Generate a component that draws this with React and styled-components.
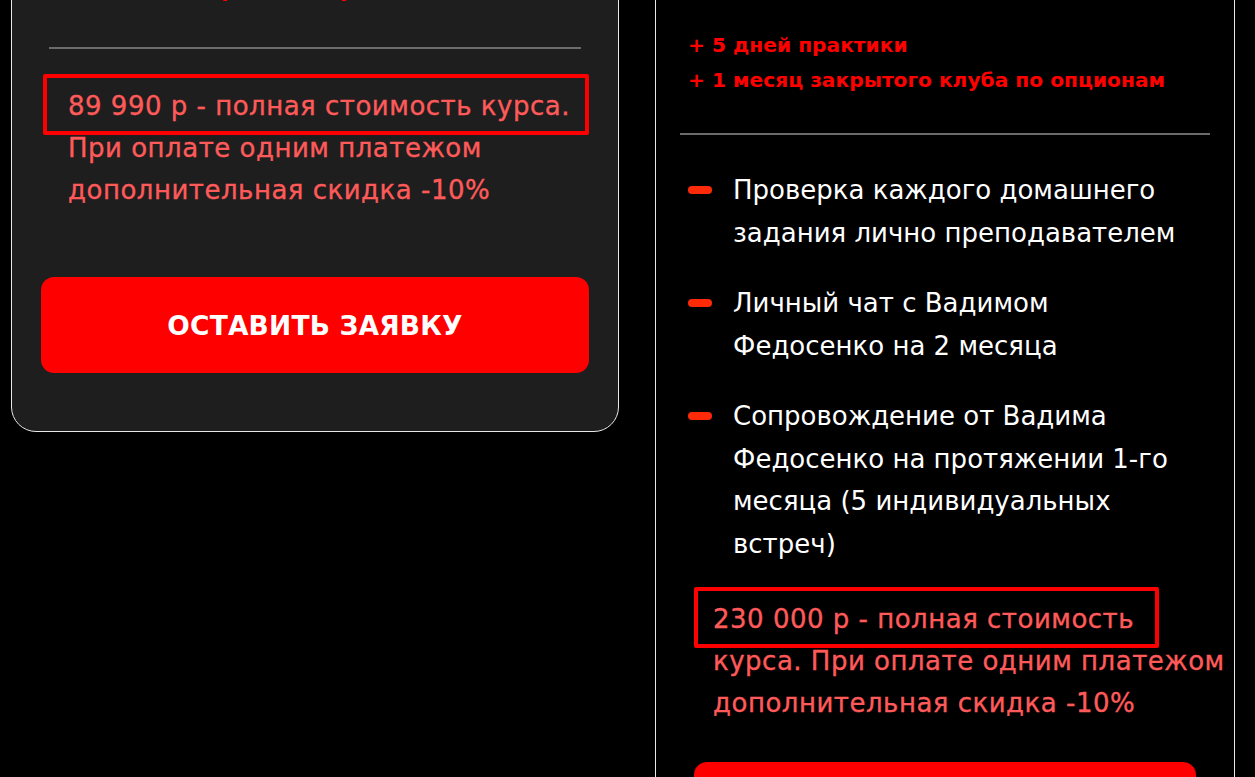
import React from "react";
import styled, { createGlobalStyle } from "styled-components";

const GlobalStyle = createGlobalStyle`
  html, body { margin: 0; padding: 0; background: #000; }
  body { font-family: "DejaVu Sans", "Noto Sans", sans-serif; overflow: hidden; }
  * { box-sizing: border-box; }
`;

const Page = styled.div`
  display: flex;
  align-items: flex-start;
  gap: 36px;
  padding-left: 11px;
  margin-top: -145px;
`;

const Card = styled.section`
  width: ${(p) => p.$width}px;
  flex: none;
  background: ${(p) => p.$bg};
  border: 1px solid #e8e8e8;
  border-radius: 25px;
  padding: ${(p) => p.$top}px ${(p) => p.$side}px ${(p) => p.$bottom}px;
  display: flex;
  flex-direction: column;
`;

const Bonus = styled.ul`
  list-style: none;
  margin: 0;
  padding: 0 0 0 ${(p) => p.$indent}px;
  color: #ff0000;
  font-weight: 700;
  font-size: 20.2px;
  line-height: 35px;
  white-space: nowrap;
`;

const Divider = styled.hr`
  border: 0;
  height: 2px;
  background: #6b6b6b;
  margin: ${(p) => p.$above}px ${(p) => p.$inset}px ${(p) => p.$below}px;
`;

const Features = styled.ul`
  list-style: none;
  margin: 0;
  padding: 0 0 0 8px;
  display: flex;
  flex-direction: column;
  gap: 28px;
`;

const Feature = styled.li`
  display: flex;
  align-items: flex-start;
  gap: 21px;
  color: #fff;
  font-size: 26px;
  line-height: 42.5px;
  white-space: nowrap;
`;

const Dash = styled.span`
  flex: none;
  width: 24px;
  height: 8px;
  margin-top: 17px;
  border-radius: 4px;
  background: #ff2a08;
`;

const Price = styled.p`
  margin: ${(p) => p.$above}px 0 0;
  padding-left: ${(p) => p.$indent}px;
  color: #ff5a5a;
  font-size: 26px;
  line-height: 42px;
  letter-spacing: 0.5px;
  white-space: nowrap;
  -webkit-text-stroke: 0.35px #ff5a5a;
`;

const Marked = styled.span`
  position: relative;
  &::before {
    content: "";
    position: absolute;
    top: -17px;
    bottom: -14px;
    left: ${(p) => -p.$left}px;
    right: ${(p) => -p.$right}px;
    border: 4px solid #ff0000;
    border-radius: 2px;
    pointer-events: none;
  }
`;

const Button = styled.button`
  display: flex;
  align-items: center;
  justify-content: center;
  height: 96px;
  margin: ${(p) => p.$above}px ${(p) => p.$inset}px 0;
  border: 0;
  border-radius: 13px;
  background: #ff0000;
  color: #fff;
  font-family: inherit;
  font-weight: 700;
  font-size: 26.5px;
  letter-spacing: 0.2px;
  cursor: pointer;
`;

export default function App() {
  return (
    <>
      <GlobalStyle />
      <Page>
        <Card $width={608} $bg="#1e1e1e" $top={82} $side={29} $bottom={58}>
          <Bonus $indent={19}>
            <li>+ 5 дней практики</li>
            <li>+ 1 месяц закрытого клуба по опционам</li>
          </Bonus>
          <Divider $inset={8} $above={39} $below={0} />
          <Price $indent={27} $above={36}>
            <Marked $left={25} $right={19}>89 990 р - полная стоимость курса.</Marked>
            <br />
            При оплате одним платежом
            <br />
            дополнительная скидка -10%
          </Price>
          <Button $above={66} $inset={0}>ОСТАВИТЬ ЗАЯВКУ</Button>
        </Card>

        <Card $width={580} $bg="#000" $top={172} $side={24} $bottom={60}>
          <Bonus $indent={8}>
            <li>+ 5 дней практики</li>
            <li>+ 1 месяц закрытого клуба по опционам</li>
          </Bonus>
          <Divider $inset={0} $above={35} $below={34} />
          <Features>
            <Feature>
              <Dash />
              <span>
                Проверка каждого домашнего
                <br />
                задания лично преподавателем
              </span>
            </Feature>
            <Feature>
              <Dash />
              <span>
                Личный чат с Вадимом
                <br />
                Федосенко на 2 месяца
              </span>
            </Feature>
            <Feature>
              <Dash />
              <span>
                Сопровождение от Вадима
                <br />
                Федосенко на протяжении 1-го
                <br />
                месяца (5 индивидуальных
                <br />
                встреч)
              </span>
            </Feature>
          </Features>
          <Price $indent={33} $above={33}>
            <Marked $left={19} $right={25}>230 000 р - полная стоимость</Marked>
            <br />
            курса. При оплате одним платежом
            <br />
            дополнительная скидка -10%
          </Price>
          <Button $above={38} $inset={14}>ОСТАВИТЬ ЗАЯВКУ</Button>
        </Card>
      </Page>
    </>
  );
}
